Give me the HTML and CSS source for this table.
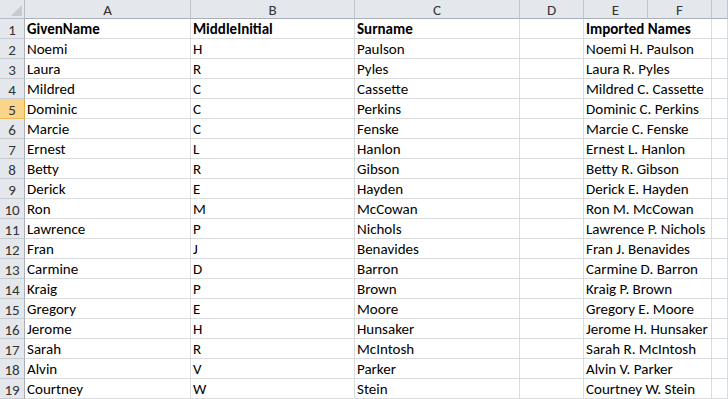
FILE: index.html
```html
<!DOCTYPE html>
<html>
<head>
<meta charset="utf-8">
<link rel="stylesheet" href="styles.css">
</head>
<body>
<div class="sheet" id="sheet">
  <div class="hdr corner"><span class="tri"></span></div>
  <div class="hdr col">A</div>
  <div class="hdr col">B</div>
  <div class="hdr col">C</div>
  <div class="hdr col">D</div>
  <div class="hdr col">E</div>
  <div class="hdr col">F</div>
  <div class="hdr col last"></div>
</div>
<script src="script.js"></script>
</body>
</html>
```
FILE: script.js
```js
const rows = [
  ["GivenName","MiddleInitial","Surname","","Imported Names"],
  ["Noemi","H","Paulson","","Noemi H. Paulson"],
  ["Laura","R","Pyles","","Laura R. Pyles"],
  ["Mildred","C","Cassette","","Mildred C. Cassette"],
  ["Dominic","C","Perkins","","Dominic C. Perkins"],
  ["Marcie","C","Fenske","","Marcie C. Fenske"],
  ["Ernest","L","Hanlon","","Ernest L. Hanlon"],
  ["Betty","R","Gibson","","Betty R. Gibson"],
  ["Derick","E","Hayden","","Derick E. Hayden"],
  ["Ron","M","McCowan","","Ron M. McCowan"],
  ["Lawrence","P","Nichols","","Lawrence P. Nichols"],
  ["Fran","J","Benavides","","Fran J. Benavides"],
  ["Carmine","D","Barron","","Carmine D. Barron"],
  ["Kraig","P","Brown","","Kraig P. Brown"],
  ["Gregory","E","Moore","","Gregory E. Moore"],
  ["Jerome","H","Hunsaker","","Jerome H. Hunsaker"],
  ["Sarah","R","McIntosh","","Sarah R. McIntosh"],
  ["Alvin","V","Parker","","Alvin V. Parker"],
  ["Courtney","W","Stein","","Courtney W. Stein"]
];
const sheet = document.getElementById("sheet");
rows.forEach((r, i) => {
  const n = document.createElement("div");
  n.className = "hdr row" + (i === 4 ? " sel" : "");
  n.textContent = i + 1;
  sheet.appendChild(n);
  const vals = [r[0], r[1], r[2], r[3], r[4], "", ""];
  vals.forEach((v, j) => {
    const c = document.createElement("div");
    c.className = "cell" + (i === 0 ? " bold" : "") + (j === 4 ? " spill" : "");
    c.textContent = v;
    sheet.appendChild(c);
  });
});
```
FILE: styles.css
```css
html, body {
  margin: 0;
  padding: 0;
  background: #ffffff;
  overflow: hidden;
}
.sheet {
  display: grid;
  grid-template-columns: 25px 166px 164px 165px 64px 64px 64px 16px;
  grid-template-rows: 19px repeat(19, 20px);
  font-family: "Carlito", "Calibri", "Open Sans", sans-serif;
  font-size: 15px;
  color: #000;
  width: 728px;
  height: 399px;
}
.hdr {
  background: #e4e7eb;
  color: #333;
  box-sizing: border-box;
  border-right: 1px solid #b5bcc5;
  border-bottom: 1px solid #b5bcc5;
  display: flex;
  align-items: center;
  justify-content: center;
  font-size: 15px;
}
.hdr.col {
  border-right-color: #c0c6cf;
  border-bottom-color: #a9b0b8;
  padding-top: 1px;
}
.hdr.row {
  border-bottom-color: #c7ccd3;
  border-right-color: #a9b0b8;
  padding-top: 2px;
}
.hdr.sel {
  background: #f8d58a;
  border-bottom-color: #f0b94f;
  border-right-color: #e9a93b;
}
.corner {
  position: relative;
}
.tri {
  position: absolute;
  right: 2px;
  bottom: 2px;
  width: 0;
  height: 0;
  border-left: 11px solid transparent;
  border-bottom: 11px solid #c7cbd1;
}
.cell {
  box-sizing: border-box;
  border-right: 1px solid #dadcdd;
  border-bottom: 1px solid #dadcdd;
  padding: 0 0 0 2px;
  display: flex;
  align-items: flex-end;
  white-space: nowrap;
  line-height: 17px;
  padding-bottom: 0;
}
.cell.spill {
  border-right-color: transparent;
  overflow: visible;
  position: relative;
  z-index: 1;
}
.bold {
  font-weight: bold;
}
```
